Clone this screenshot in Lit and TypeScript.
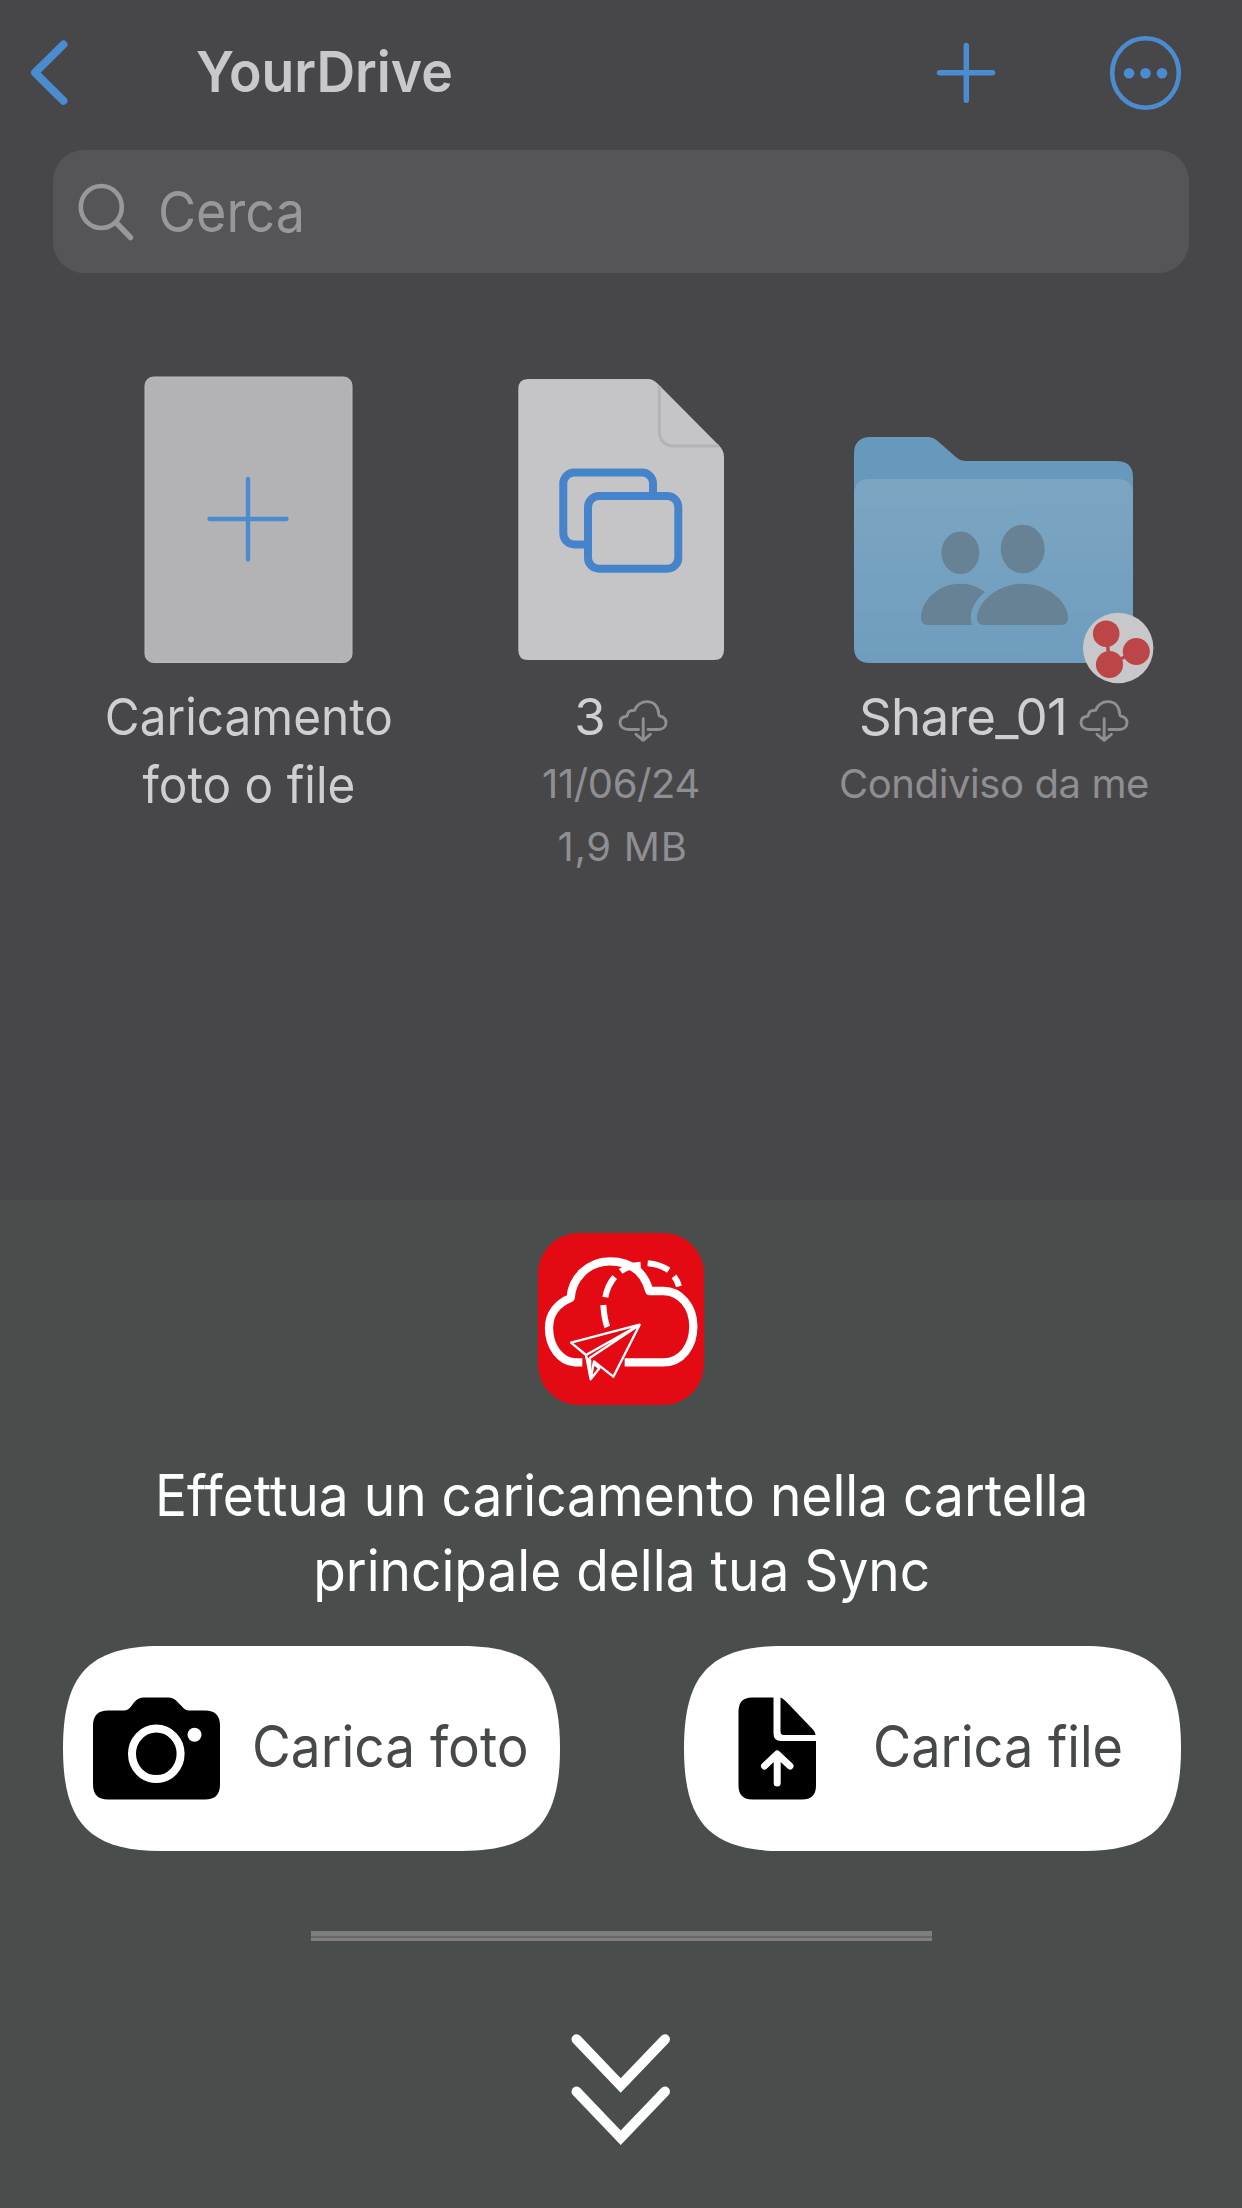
import { LitElement, html, css } from "lit";
import { customElement } from "lit/decorators.js";

const cloud = html`<svg class="cloud" viewBox="0 0 50 44">
  <path d="M20.500 30.500H10.500C5.500 30.500 2 27.500 2 23.500C2 19.800 4.700 17.500 8.600 17.200C9.600 16.600 9.300 15.500 10 14C11 11.500 13.500 11.300 16.500 11.300C18.800 6 22.800 2.600 29 2.600C36 2.600 40.300 7.600 40.600 14.200C40.600 16 40.800 16.600 42 17.200C45.500 18 48 20.500 48 23.500C48 27.500 45 30.500 40.500 30.500H30"/>
  <path d="M25.200 19.800V41M18 35.300L25.200 41.300L32.400 35.300"/>
</svg>`;

const buttonShape = html`<svg class="shape" width="497" height="205" viewBox="0 0 497 205">
  <path d="M0 102.500C0 30 25 0 98 0H399C472 0 497 30 497 102.500C497 175 472 205 399 205H98C25 205 0 175 0 102.500Z"/>
</svg>`;

@customElement("app-root")
export class AppRoot extends LitElement {
  static styles = css`
    :host {
      display: flex;
      flex-direction: column;
      width: 1242px;
      height: 2208px;
      overflow: hidden;
      background: #474749;
      font-family: Inter, "Liberation Sans", sans-serif;
    }
    * { box-sizing: border-box; }
    svg { display: block; overflow: visible; flex: none; }
    .browser { height: 1200px; flex: none; display: flex; flex-direction: column; }
    header { height: 150px; padding: 0 60px 4px 29px; display: flex; align-items: center; color: #c9c9cb; }
    .blue { fill: none; stroke: #4b8bd0; stroke-linecap: round; stroke-linejoin: round; }
    .title { flex: 1; margin: -2px 0 0 127px; font-size: 56px; font-weight: 600; line-height: 70px; white-space: nowrap; }
    .narrow { display: inline-block; transform-origin: left center; transform: scaleX(0.932); }
    .title .narrow { transform: scaleX(0.956); }
    .more { margin-left: 114px; }
    .search { margin: 0 53px; height: 123px; border-radius: 31px; background: #555458; display: flex; align-items: center; color: #98979c; padding: 1px 0 0 25px; font-size: 56px; line-height: 70px; }
    .search svg { margin: 0 23px 0 0; }
    .files { display: grid; grid-template-columns: 372px 374px 372px; justify-content: center; padding-top: 99px; }
    .item { display: flex; flex-direction: column; align-items: center; text-align: center; white-space: nowrap; }
    .name { margin-top: 1px; display: flex; align-items: center; gap: 12px; font-size: 51px; line-height: 68px; color: #cfcfd1; }
    .name.wrap { transform: translateX(1px) scaleX(0.936); }
    .name.tight { letter-spacing: -0.7px; }
    .cloud { width: 50px; height: 44px; fill: none; stroke: #8f8e93; stroke-width: 2.9; stroke-linecap: round; stroke-linejoin: round; margin-top: 8px; }
    .meta { margin-top: 1px; font-size: 40px; line-height: 63px; letter-spacing: -0.4px; color: #8f8e93; }
    .size { letter-spacing: 0.7px; margin-left: 3px; }
    .panel { flex: 1; background: #494d4b; display: flex; flex-direction: column; align-items: center; padding-top: 33px; color: #fff; }
    .message { margin-top: 53px; font-size: 57px; line-height: 75px; text-align: center; white-space: nowrap; transform: translateX(1px) scaleX(0.934); }
    .actions { margin-top: 38px; padding-left: 2px; display: flex; gap: 124px; }
    .action { width: 497px; height: 205px; position: relative; display: flex; align-items: center; color: #454948; font-size: 57px; line-height: 70px; white-space: nowrap; }
    .shape { position: absolute; left: 0; top: 0; fill: #fff; }
    .icon { position: relative; width: 187px; height: 205px; }
    .label { position: relative; margin: -4px 0 0 2px; }
    .label.file { transform: scaleX(0.916); }
    .divider { margin-top: 80px; width: 621px; height: 10px; background: linear-gradient(#7c7f7e 0 5px, #676767 5px 7px, #7f7f7f 7px 10px); }
    .down { margin-top: 88px; }
  `;

  render() {
    return html`
      <div class="browser">
        <header>
          <svg class="blue" width="40" height="66" viewBox="30 39 40 66" stroke-width="8"><path d="M64.500 43.500L36 71.700L64.500 99.800"/></svg>
          <div class="title"><span class="narrow">YourDrive</span></div>
          <svg class="blue" width="60" height="62" viewBox="936 42 60 62" stroke-width="5.500"><path d="M966.300 45.500V100.300M939.500 72.700H992.500"/></svg>
          <svg class="blue more" width="72" height="75" viewBox="1110 35 72 75">
            <ellipse cx="1145.500" cy="72" rx="33.300" ry="34.700" stroke-width="4.600"/>
            <g fill="#4b8bd0" stroke="none"><circle cx="1129" cy="72.300" r="5.300"/><circle cx="1145.500" cy="72.300" r="5.300"/><circle cx="1162" cy="72.300" r="5.300"/></g>
          </svg>
        </header>
        <div class="search">
          <svg width="57" height="59" viewBox="78 182 57 59" fill="none" stroke="#98979c" stroke-linecap="round">
            <ellipse cx="101.300" cy="206" rx="20.500" ry="21" stroke-width="4.600"/><path d="M116 221.500L130.500 236.500" stroke-width="5.500"/>
          </svg>
          <span class="narrow">Cerca</span>
        </div>
        <div class="files">
          <div class="item">
            <svg width="340" height="310" viewBox="78 372 340 310">
              <rect x="145" y="377" width="207" height="285.500" rx="8.500" fill="#b3b2b4" stroke="#bdbcbe"/>
              <path class="blue" stroke-width="4.300" d="M248 479V559.500M209.500 519H286.500"/>
            </svg>
            <div class="name wrap"><span>Caricamento<br>foto o file</span></div>
          </div>
          <div class="item">
            <svg width="340" height="310" viewBox="451 372 340 310">
              <path fill="#c5c5c7" d="M528 379H648Q653 379 658 384L719 445.500Q724 450.500 724 457V650Q724 660 714 660H528Q518.300 660 518.300 650V389Q518.300 379 528 379Z"/>
              <path fill="none" stroke="#b4b4b6" stroke-width="3" d="M659.300 386V430Q659.300 446 675 446H719"/>
              <g fill="#c5c5c7" stroke="#4583cb" stroke-width="8"><rect x="563.300" y="472.500" width="89.700" height="72" rx="11"/><rect x="588" y="496" width="90.300" height="72.700" rx="11"/></g>
            </svg>
            <div class="name"><span>3</span>${cloud}</div>
            <div class="meta">11/06/24<br><span class="size">1,9 MB</span></div>
          </div>
          <div class="item">
            <svg width="340" height="310" viewBox="824 372 340 310">
              <defs><linearGradient id="front" x1="0" y1="0" x2="0" y2="1"><stop offset="0" stop-color="#7ba6c2"/><stop offset="1" stop-color="#6f9dbe"/></linearGradient></defs>
              <path fill="#6799bc" d="M854 500V454Q854 437 871 437H928Q933 437 937 440.500L957 458Q960.500 461 965 461H1116Q1133 461 1133 477V500Z"/>
              <path fill="url(#front)" d="M854 495Q854 479 870 479H1117Q1133 479 1133 495V647Q1133 663 1117 663H870Q854 663 854 647Z"/>
              <g fill="#668294">
                <ellipse cx="960.400" cy="552.700" rx="19" ry="21.300"/><ellipse cx="1022.700" cy="549" rx="22" ry="24.300"/>
                <path d="M977 618C977 602 998 583.700 1022.500 583.700C1048 583.700 1068 602 1068 618Q1068 625 1061 625H984Q977 625 977 618Z"/>
                <path d="M921 618C921 600 939 583.700 960 583.700C970 583.700 979 587 985 592C974 601 968 613 972 625H928Q921 625 921 618Z"/>
              </g>
              <circle cx="1118.200" cy="648" r="35.200" fill="#c8c8ca"/>
              <path d="M1107 634L1109 664L1136 652" fill="none" stroke="#bb4547" stroke-width="3.500"/>
              <g fill="#bb4547"><circle cx="1106.200" cy="633.700" r="13.300"/><circle cx="1136.300" cy="651.500" r="13.500"/><circle cx="1109.500" cy="664.500" r="13.600"/></g>
            </svg>
            <div class="name tight"><span>Share_01</span>${cloud}</div>
            <div class="meta">Condiviso da me</div>
          </div>
        </div>
      </div>
      <div class="panel">
        <svg width="166" height="172" viewBox="54 160 498 516" fill="none" stroke="#fff" stroke-linejoin="round">
          <rect x="54" y="160" width="498" height="516" rx="122" fill="#e30a13" stroke="none"/>
          <path stroke-width="25" d="M187 548H165C120 545 87 500 87 445C87 400 115 370 152 355C155 300 200 245 270 245C340 245 375 285 388 334H430C480 334 520 380 520 440C520 500 485 548 430 548H314"/>
          <path stroke-width="18" stroke-linecap="butt" d="M262 442Q253 420 250 376M256 353Q262 318 284 292M302 275Q325 258 362 255M383 251Q420 254 446 272M462 290Q472 302 477 320"/>
          <path stroke-width="7" d="M359 435L153 489L198 526L359 435L208 536M198 526L212 599L238 566L220 551M212 599L222 545L280 591L359 435"/>
          <path stroke="none" fill="#fff" d="M195 528L214 540L214 598Z"/>
        </svg>
        <div class="message">Effettua un caricamento nella cartella<br>principale della tua Sync</div>
        <div class="actions">
          <div class="action">${buttonShape}
            <svg class="icon" viewBox="63 1645.500 187 205">
              <path d="M108 1710H124Q128 1710 131 1706L134 1702Q138 1697 144 1697H168Q174 1697 178 1702L182 1706Q185 1710 189 1710H205Q220 1710 220 1725V1784Q220 1799 205 1799H108Q93 1799 93 1784V1725Q93 1710 108 1710Z"/>
              <ellipse cx="156.300" cy="1753.300" rx="24.300" ry="25.300" stroke="#fff" stroke-width="8"/><circle cx="194.500" cy="1734.200" r="7" fill="#fff"/>
            </svg>
            <span class="narrow label">Carica foto</span></div>
          <div class="action">${buttonShape}
            <svg class="icon" viewBox="684 1645.500 187 205">
              <path d="M752 1697H773.500V1733Q773.500 1740.500 781 1740.500H816V1785Q816 1799 802 1799H752.500Q738.500 1799 738.500 1785V1711Q738.500 1697 752 1697Z"/>
              <path d="M780.500 1697Q783 1698 786 1701L812 1728Q815.500 1731.500 815.500 1734.500H784Q780.500 1734.500 780.500 1731Z"/>
              <path fill="none" stroke="#fff" stroke-width="7" stroke-linecap="round" stroke-linejoin="round" d="M777.200 1782.500V1754M764.500 1765.500L777.200 1753.500L790 1765.500"/>
            </svg>
            <span class="narrow label file">Carica file</span></div>
        </div>
        <div class="divider"></div>
        <svg class="down" width="100" height="120" viewBox="571 2030 100 120" fill="none" stroke="#fff" stroke-width="10" stroke-linecap="round">
          <path d="M576.500 2040.300L620.700 2086.500L665 2040.300M576.500 2092.500L620.700 2138.800L665 2092.500"/>
        </svg>
      </div>`;
  }
}
